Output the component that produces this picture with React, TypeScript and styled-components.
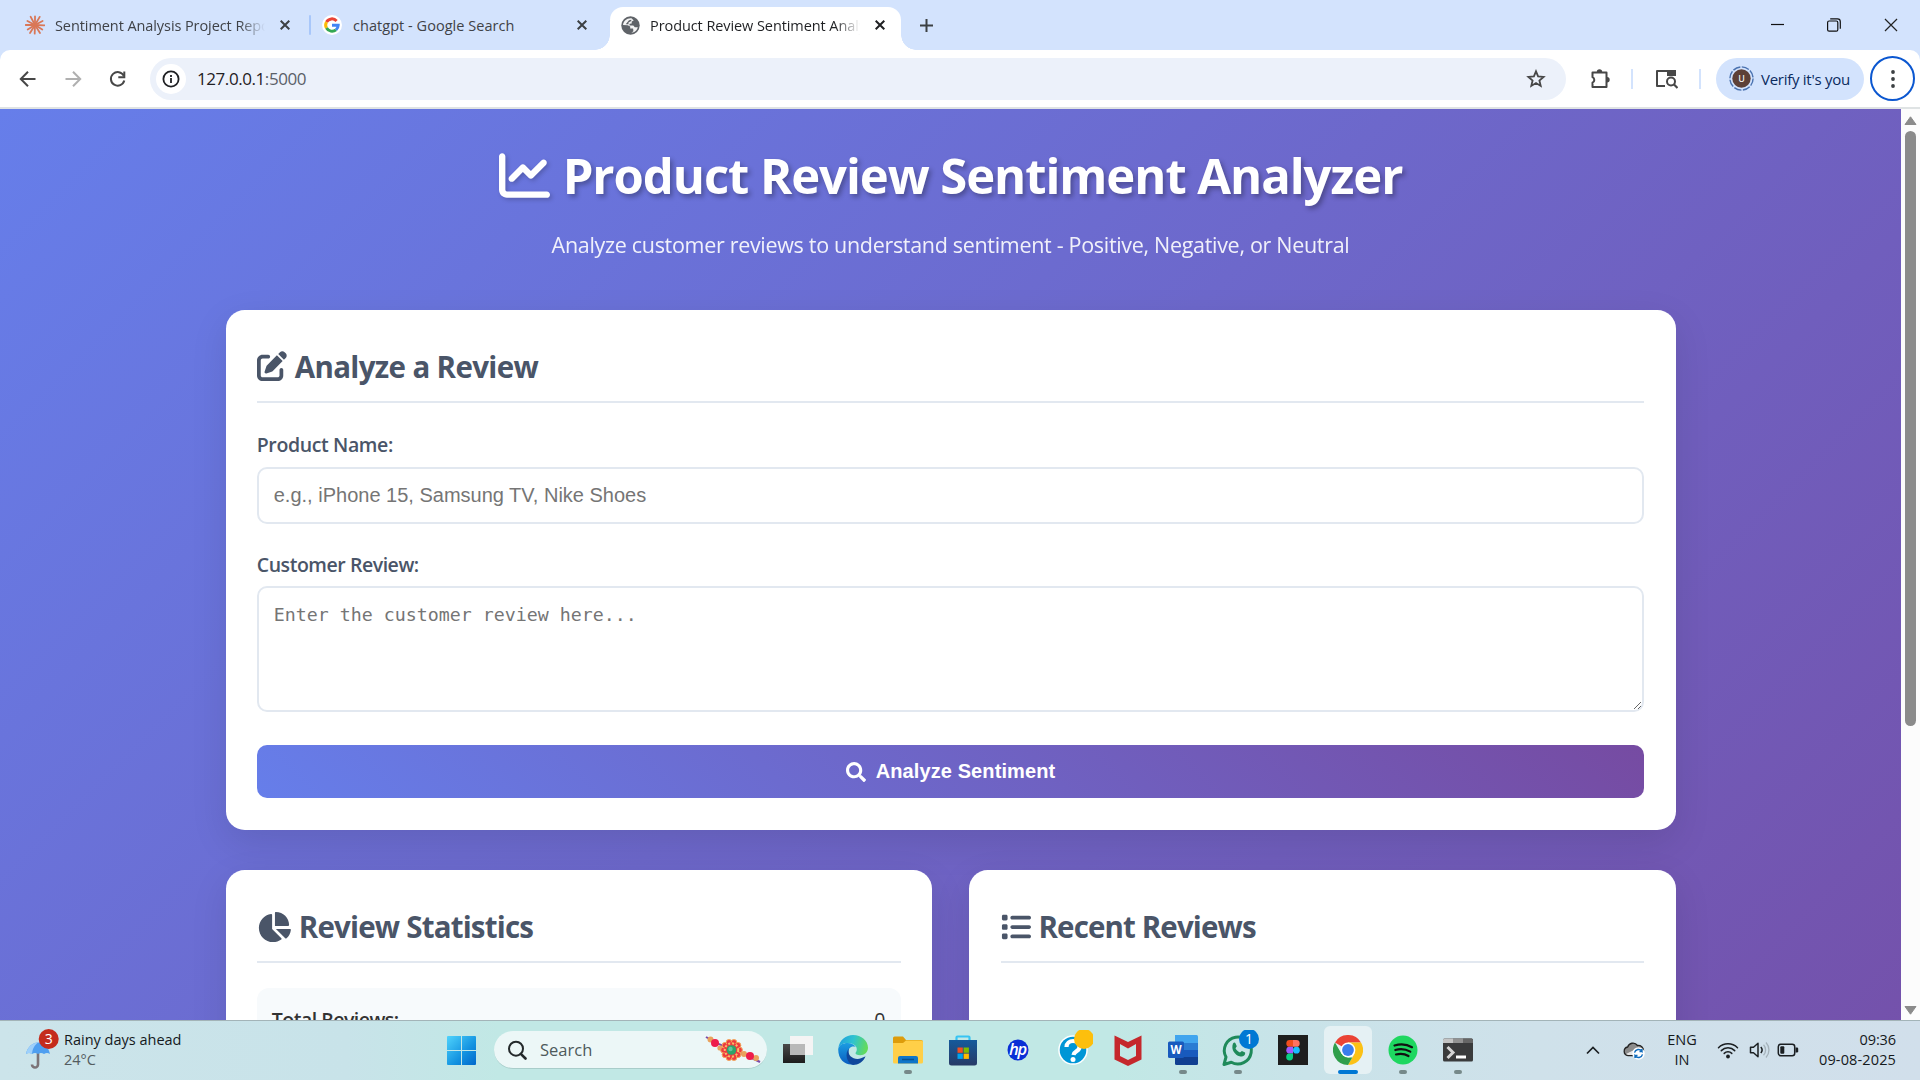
import React from 'react';
import styled, { createGlobalStyle } from 'styled-components';
import { FaChartLine, FaPenToSquare, FaChartPie, FaList } from 'react-icons/fa6';
import { FaSearch } from 'react-icons/fa';

const ui = `'Open Sans', 'Noto Sans', sans-serif`;

const GlobalStyle = createGlobalStyle`
  * { box-sizing: border-box; margin: 0; padding: 0; }
  body { width: 1920px; height: 1080px; overflow: hidden; font-family: ${ui}; }
  svg { display: block; flex: none; }
`;

const Screen = styled.div`
  width: 1920px;
  height: 1080px;
  display: flex;
  flex-direction: column;
  overflow: hidden;
`;

const Text = styled.span<{ $size: number; $track?: number; $weight?: number; $color?: string; $line?: number }>`
  display: block;
  white-space: pre;
  font-size: ${p => p.$size}px;
  letter-spacing: ${p => p.$track ?? 0}px;
  font-weight: ${p => p.$weight ?? 400};
  color: ${p => p.$color ?? 'inherit'};
  line-height: ${p => (p.$line ? `${p.$line}px` : 'normal')};
`;

/* ---------- browser chrome ---------- */

const TabStrip = styled.div`
  height: 50px;
  flex: none;
  display: flex;
  background: #d3e3fd;
`;

const Tab = styled.div<{ $width: number; $left: number }>`
  width: ${p => p.$width}px;
  height: 50px;
  padding-left: ${p => p.$left}px;
  display: flex;
  align-items: center;
  color: #3f4247;
`;

const ActiveTab = styled(Tab)`
  position: relative;
  height: 43px;
  margin-top: 7px;
  padding-bottom: 7px;
  background: #fff;
  border-radius: 13px 13px 0 0;
  color: #1f2023;
  &::before, &::after {
    content: '';
    position: absolute;
    bottom: 0;
    width: 15px;
    height: 15px;
  }
  &::before { left: -15px; background: radial-gradient(circle at 0 0, transparent 14.5px, #fff 15px); }
  &::after { right: -15px; background: radial-gradient(circle at 100% 0, transparent 14.5px, #fff 15px); }
`;

const TabTitle = styled.div<{ $width: number; $fade?: boolean; $gap: number }>`
  width: ${p => p.$width}px;
  margin-left: ${p => p.$gap}px;
  overflow: hidden;
  ${p => p.$fade && 'mask-image: linear-gradient(90deg, #000 88%, transparent 100%);'}
`;

const TabDivider = styled.div`
  width: 2px;
  height: 20px;
  margin-top: 15px;
  border-radius: 1px;
  background: #a8c7fa;
`;

const NewTab = styled.div`
  padding: 0 0 0 19px;
  display: flex;
  align-items: center;
`;

const WindowButtons = styled.div`
  margin-left: auto;
  width: 171px;
  display: flex;
  align-items: center;
  justify-content: space-around;
`;

const ToolbarBack = styled.div`
  height: 59px;
  flex: none;
  background: #d3e3fd;
`;

const Toolbar = styled.div`
  height: 59px;
  display: flex;
  align-items: center;
  padding: 0 5px 0 17px;
  background: #fff;
  border-bottom: 2px solid #dfe3e4;
  border-radius: 10px 10px 0 0;
`;

const NavIcons = styled.div`
  width: 133px;
  display: flex;
  gap: 23px;
`;

const Omnibox = styled.div`
  width: 1416px;
  height: 42px;
  border-radius: 21px;
  background: #ecf1fa;
  display: flex;
  align-items: center;
  padding: 0 20px 0 6px;
`;

const SiteInfo = styled.div`
  width: 30px;
  height: 30px;
  border-radius: 50%;
  background: #fff;
  display: grid;
  place-items: center;
  margin-right: 11px;
`;

const Port = styled.span`
  color: #5a6068;
`;

const StarSlot = styled.div`
  margin-left: auto;
`;

const Actions = styled.div`
  flex: 1;
  display: flex;
  align-items: center;
  justify-content: flex-end;
`;

const ActionSlot = styled.div<{ $width: number }>`
  width: ${p => p.$width}px;
  display: grid;
  place-items: center;
`;

const Divider = styled.div`
  width: 2px;
  height: 20px;
  background: #d3e3fd;
`;

const ProfilePill = styled.div`
  width: 148px;
  height: 42px;
  margin: 0 6px 0 15px;
  border-radius: 21px;
  background: #d3e3fd;
  display: flex;
  align-items: center;
  gap: 7px;
  padding-left: 13px;
`;

const MenuRing = styled.div`
  width: 45px;
  height: 45px;
  border: 2px solid #0b57d0;
  border-radius: 50%;
  display: grid;
  place-items: center;
`;

/* ---------- page ---------- */

const Viewport = styled.div`
  height: 911px;
  flex: none;
  display: flex;
  overflow: hidden;
`;

const Page = styled.main`
  width: 1901px;
  height: 1332px;
  background: linear-gradient(135deg, #667eea 0%, #764ba2 100%);
`;

const Container = styled.div`
  width: 1500px;
  margin: 0 auto;
  padding: 25px;
`;

const Header = styled.header`
  height: 175.6px;
  color: #fff;
  display: flex;
  flex-direction: column;
  align-items: center;
`;

const Title = styled.h1`
  height: 82px;
  display: flex;
  align-items: center;
  gap: 13px;
  text-shadow: 2.5px 2.5px 5px rgba(0, 0, 0, 0.3);
  svg { filter: drop-shadow(2px 2px 2px rgba(0, 0, 0, 0.2)); }
`;

const Subtitle = styled.div`
  padding-top: 14px;
  opacity: 0.9;
`;

const Card = styled.section<{ $height: number }>`
  height: ${p => p.$height}px;
  padding: 31.25px;
  border-radius: 18.75px;
  background: #fff;
  box-shadow: 0 12.5px 37.5px rgba(0, 0, 0, 0.1);
`;

const CardTitle = styled.h2<{ $gap: number }>`
  height: 62px;
  display: flex;
  align-items: center;
  gap: ${p => p.$gap}px;
  color: #4a5568;
  padding-bottom: 9px;
  border-bottom: 2.5px solid #e2e8f0;
`;

const Field = styled.div<{ $top: number }>`
  padding-top: ${p => p.$top}px;
`;

const Label = styled.label`
  display: block;
  height: 35.1px;
  color: #4a5568;
`;

const Input = styled.input`
  display: block;
  width: 100%;
  height: 57px;
  padding: 0 15px;
  border: 2.5px solid #e2e8f0;
  border-radius: 10px;
  font: 20px 'Liberation Sans', Arial, sans-serif;
  &::placeholder { color: #757575; opacity: 1; }
`;

const TextArea = styled.textarea`
  display: block;
  width: 100%;
  height: 126px;
  padding: 15px;
  border: 2.5px solid #e2e8f0;
  border-radius: 10px;
  font: 18.27px/24px 'DejaVu Sans Mono', monospace;
  resize: vertical;
  &::placeholder { color: #757575; opacity: 1; }
`;

const SubmitButton = styled.button`
  width: 100%;
  height: 53.5px;
  margin-top: 32.5px;
  border: 0;
  border-radius: 10px;
  background: linear-gradient(45deg, #667eea, #764ba2);
  color: #fff;
  font: bold 20px 'Liberation Sans', Arial, sans-serif;
  letter-spacing: 0.1px;
  display: flex;
  align-items: center;
  justify-content: center;
  gap: 10px;
`;

const Columns = styled.div`
  display: grid;
  grid-template-columns: 1fr 1fr;
  gap: 37.5px;
  margin-top: 40.4px;
`;

const StatRow = styled.div`
  margin-top: 25px;
  height: 70px;
  padding: 18px 15px 0;
  border-radius: 12px;
  background: #f7fafc;
  color: #333;
  display: flex;
  justify-content: space-between;
`;

const Scrollbar = styled.div`
  width: 19px;
  background: #fcfcfc;
  display: flex;
  flex-direction: column;
  align-items: center;
  padding: 7px 0 5px;
`;

const Thumb = styled.div`
  width: 11px;
  height: 595px;
  margin: 6px 0 auto;
  border-radius: 6px;
  background: #8b8b8b;
`;

/* ---------- taskbar ---------- */

const Taskbar = styled.footer`
  height: 60px;
  flex: none;
  display: flex;
  border-top: 1px solid #a3b4b8;
  background: linear-gradient(90deg, #cce4ea 0%, #c8e3e9 18%, #c1e8e5 26%, #c1e8e5 58%, #c9e3e9 68%, #cfe1ea 80%, #d1dfeb 100%);
  color: #15191c;
`;

const Weather = styled.div`
  width: 434px;
  padding: 0 0 2px 24px;
  display: flex;
  align-items: center;
  gap: 4px;
`;

const Start = styled.div`
  width: 60px;
  display: grid;
  place-items: center;
  padding-right: 6px;
`;

const SearchBox = styled.div`
  width: 273px;
  height: 38px;
  margin: 10px 3px 0 0;
  border-radius: 19px;
  border-bottom: 1px solid #a9cdca;
  background: #ecf7f7;
  display: flex;
  align-items: center;
  padding: 0 6px 0 13px;
  gap: 13px;
  > :last-child { margin-left: auto; }
`;

const AppButton = styled.div<{ $active?: boolean }>`
  width: 48px;
  height: 48px;
  margin: 5px 3.5px 0;
  border-radius: 6px;
  background: ${p => (p.$active ? '#e5f1f4' : 'transparent')};
  display: flex;
  flex-direction: column;
  align-items: center;
  justify-content: flex-end;
  gap: 5px;
`;

const AppIconBox = styled.div`
  width: 30px;
  height: 30px;
  display: flex;
  align-items: center;
  justify-content: center;
`;

const Indicator = styled.i<{ $kind?: 'open' | 'active' }>`
  width: ${p => (p.$kind === 'active' ? 20 : 8)}px;
  height: 4px;
  border-radius: 2px;
  background: ${p => (p.$kind === 'active' ? '#0078d4' : p.$kind === 'open' ? '#76898a' : 'transparent')};
`;

const Tray = styled.div`
  margin-left: auto;
  display: flex;
  align-items: center;
  padding: 0 24px 1px 0;
`;

const TraySlot = styled.div<{ $width: number }>`
  width: ${p => p.$width}px;
  display: grid;
  justify-items: center;
`;

const Clock = styled.div`
  width: 85px;
  display: grid;
  justify-items: end;
`;

/* ---------- icons ---------- */

const Cross = ({ size = 10, width = 2, color = '#3c4043' }: { size?: number; width?: number; color?: string }) => (
  <svg width={size} height={size} viewBox="0 0 10 10">
    <path d="M.7.7l8.6 8.6M9.3.7L.7 9.3" stroke={color} strokeWidth={(width * 10) / size} fill="none" />
  </svg>
);

const Burst = () => (
  <svg width="20" height="20" viewBox="-10 -10 20 20">
    {[2, 32, 58, 92, 122, 148, 180, 208, 242, 270, 300, 332].map((a, i) => (
      <path key={a} d={`M0 0L${i % 2 ? 8.6 : 9.4} 0`} stroke="#d97757" strokeWidth="1.8" strokeLinecap="round" transform={`rotate(${a})`} />
    ))}
  </svg>
);

const GoogleIcon = () => (
  <svg width="20" height="20" viewBox="0 0 20 20">
    <circle cx="10" cy="10" r="10" fill="#fff" />
    <g fill="none" strokeWidth="3">
      <path d="M14.6 5.9A6.3 6.3 0 0 0 4.5 7" stroke="#ea4335" />
      <path d="M4.5 6.9A6.3 6.3 0 0 0 4.5 13.1" stroke="#fbbc05" />
      <path d="M4.5 13A6.3 6.3 0 0 0 14 14.8" stroke="#34a853" />
      <path d="M10 10.2h6.2A6.3 6.3 0 0 1 14 14.8" stroke="#4285f4" />
    </g>
  </svg>
);

const GlobeIcon = () => (
  <svg width="19" height="19" viewBox="0 0 19 19">
    <circle cx="9.5" cy="9.5" r="9.2" fill="#5f6368" />
    <path d="M10.5 2.300C6 1.800 2.300 5 2 9l4.800.2 2.400 1.300v1.900l2.900.2.300 2.600-2 1.500c3.300-.1 5.800-2.400 6.400-5.400h-3l-1.500-1.700H8.500V7.700l2.200-.2V5.600l2-1z" fill="#fff" opacity=".93" />
    <path d="M8 4.300l2.300-.6v1.200L7.500 6.500v1.700H4.700z" fill="#5f6368" />
  </svg>
);

const Arrow = ({ flip, color }: { flip?: boolean; color: string }) => (
  <svg width="22" height="22" viewBox="0 0 22 22">
    <path d="M18.500 11H4.500M11 3.800L3.800 11l7.200 7.200" stroke={color} strokeWidth="2" fill="none" transform={flip ? 'rotate(180 11 11)' : undefined} />
  </svg>
);

const Reload = () => (
  <svg width="22" height="22" viewBox="0 0 22 22">
    <path d="M16.800 7.800A6.800 6.800 0 1 0 17.300 12.600" stroke="#474747" strokeWidth="2" fill="none" />
    <path d="M17.300 3.500v5.700h-6" stroke="#474747" strokeWidth="2" fill="none" />
  </svg>
);

const InfoIcon = () => (
  <svg width="18" height="18" viewBox="0 0 18 18">
    <circle cx="9" cy="9" r="7.600" stroke="#1f2023" strokeWidth="1.800" fill="none" />
    <path d="M9 8v5M9 5v1.900" stroke="#1f2023" strokeWidth="1.800" />
  </svg>
);

const StarIcon = () => (
  <svg width="20" height="20" viewBox="0 0 20 20">
    <path d="M10 2.300l2.100 5.100 5.500.5-4.200 3.600 1.300 5.400L10 14l-4.700 2.900 1.300-5.400-4.200-3.600 5.500-.5z" stroke="#474747" strokeWidth="1.800" fill="none" />
  </svg>
);

const PuzzleIcon = () => (
  <svg width="22" height="22" viewBox="0 0 22 22">
    <path d="M2.500 4.500h14v14.500h-14v-4.300a3 3 0 0 0 0-5.500z" stroke="#474747" strokeWidth="2" fill="none" strokeLinejoin="round" />
    <path d="M6.800 4a2.700 2.700 0 0 1 5.400 0zM17 9.100a2.700 2.700 0 0 1 0 5.400z" fill="#474747" />
  </svg>
);

const SideSearchIcon = () => (
  <svg width="24" height="22" viewBox="0 0 24 22">
    <path d="M11 18H3V3h18v5" stroke="#474747" strokeWidth="2" fill="none" strokeLinejoin="round" />
    <path d="M13 2h9v6h-9z" fill="#474747" />
    <circle cx="17" cy="13.500" r="4" stroke="#474747" strokeWidth="2" fill="#fff" />
    <path d="M19.800 16.300l3.700 3.700" stroke="#474747" strokeWidth="2.200" />
  </svg>
);

const Avatar = () => (
  <svg width="25" height="25" viewBox="0 0 25 25">
    <circle cx="12.500" cy="12.500" r="11.600" fill="none" stroke="#4a72b0" strokeWidth="1.400" strokeDasharray="7.600 1.500" />
    <circle cx="12.500" cy="12.500" r="9.200" fill="#5d4037" />
    <text x="12.500" y="16" fontSize="9.500" fill="#fff" textAnchor="middle" fontFamily="Roboto, sans-serif">U</text>
  </svg>
);

const Umbrella = () => (
  <svg width="36" height="42" viewBox="0 0 36 42">
    <path d="M14 21v14.500a3 3 0 0 1-6 0" stroke="#7c7478" strokeWidth="2.600" fill="none" />
    <path d="M2 25C3.500 18 8 14 14 13.500 20 14 24.500 18 26 25c-2-1.500-4-1.500-6 0-2-1.500-4-1.500-6 0-2-1.500-4-1.500-6 0-2-1.500-4-1.500-6 0z" fill="#4f9ff0" />
    <path d="M2 25C3.500 18 8 14 14 13.500 10 17 8.500 20 8 25c-2-1.500-4-1.500-6 0z" fill="#9ed0fb" />
    <circle cx="24.700" cy="10" r="10" fill="#c42b1c" />
    <text x="24.700" y="15" fontSize="14" fill="#fff" textAnchor="middle" fontFamily="Open Sans, sans-serif">3</text>
  </svg>
);

const WindowsLogo = () => (
  <svg width="29" height="29" viewBox="0 0 29 29">
    <defs>
      <linearGradient id="win" x1="0" y1="0" x2="1" y2="1">
        <stop offset="0" stopColor="#4fd3fc" />
        <stop offset=".6" stopColor="#1392e0" />
        <stop offset="1" stopColor="#0067cb" />
      </linearGradient>
    </defs>
    <path d="M1 0h13v14H0V1a1 1 0 0 1 1-1zM15 0h13a1 1 0 0 1 1 1v13H15zM0 15h14v14H1a1 1 0 0 1-1-1zM15 15h14v13a1 1 0 0 1-1 1H15z" fill="url(#win)" />
  </svg>
);

const SearchGlass = () => (
  <svg width="20" height="20" viewBox="0 0 20 20">
    <circle cx="9" cy="8.700" r="7" stroke="#24292b" strokeWidth="2" fill="none" />
    <path d="M13.800 13.800l4.700 4.700" stroke="#24292b" strokeWidth="2.600" strokeLinecap="round" />
  </svg>
);

const Rakhi = () => (
  <svg width="56" height="30" viewBox="0 0 56 30">
    <path d="M1 2Q14 10 28 15T55 27" stroke="#7b4aa8" strokeWidth="2" fill="none" />
    <g fill="#e9a25c">
      <circle cx="5.500" cy="4.500" r="3" />
      <circle cx="15" cy="13" r="2.600" />
      <circle cx="39" cy="19" r="3" />
      <circle cx="51" cy="23" r="3" />
    </g>
    <circle cx="10" cy="8" r="4" fill="#ee1d4b" />
    <circle cx="45" cy="21" r="4" fill="#ee1d4b" />
    {Array.from({ length: 10 }, (_, i) => (
      <circle key={i} cx={26.500 + 8 * Math.cos((i * Math.PI) / 5)} cy={15 + 8 * Math.sin((i * Math.PI) / 5)} r="2.900" fill="#ef3a3f" stroke="#f2a65c" strokeWidth="1" />
    ))}
    <circle cx="26.500" cy="15" r="7.500" fill="#ef3a3f" />
    <circle cx="26.500" cy="15" r="6.700" fill="none" stroke="#f8c06a" strokeWidth="2" strokeDasharray="2 2" />
    <circle cx="26.500" cy="15" r="4.800" fill="#2ea36a" />
    <circle cx="25.500" cy="14" r="2.200" fill="#63c5a0" />
  </svg>
);

const TaskViewIcon = () => (
  <svg width="30" height="30" viewBox="0 0 30 30">
    <defs>
      <linearGradient id="tv" x1="0" y1="0" x2="0" y2="1"><stop offset="0" stopColor="#4a4a4a" /><stop offset="1" stopColor="#1c1c1c" /></linearGradient>
    </defs>
    <path d="M0 9h22v19H0z" fill="url(#tv)" />
    <path d="M7 1h23v19H7z" fill="#f4f4f4" />
    <path d="M7 9h15v11H7z" fill="#b9b9b9" />
  </svg>
);

const EdgeIcon = () => (
  <svg width="30" height="30" viewBox="0 0 30 30">
    <defs>
      <linearGradient id="e1" x1="0" y1=".2" x2="1" y2=".4"><stop offset="0" stopColor="#1f9fe0" /><stop offset=".5" stopColor="#2fc3cf" /><stop offset="1" stopColor="#63db5a" /></linearGradient>
      <linearGradient id="e2" x1="0" y1="0" x2="0" y2="1"><stop offset="0" stopColor="#1b9de2" /><stop offset="1" stopColor="#0a5cc0" /></linearGradient>
    </defs>
    <path d="M.3 13C1.500 5 8 0 15 0c8.500 0 15 5.800 15 12.800 0 4.500-3.500 7.500-7.700 7.500-3.400 0-5-1.200-4.800-2.300.2-.9 1.300-1.300 1.300-3.800C18.800 10.500 14.500 8 10 8 5 8 1.500 10 .3 13z" fill="url(#e1)" />
    <path d="M.2 14C1 10 5 8 9.500 8c4 0 7 2 8.300 4-5-1.700-8 2-7.500 6 .6 5.500 5 9.700 10.700 8.700C13.500 33 0 29 .2 14z" fill="url(#e2)" />
    <path d="M11 13.500c-2.500 8 6 12 12 9.800 1.500-.5 3.500-1.500 4.500-2C25.500 27 20 30 15 30 8.500 28 6.500 18 11 13.500z" fill="#10479b" />
  </svg>
);

const FolderIcon = () => (
  <svg width="30" height="28" viewBox="0 0 30 28">
    <path d="M0 2a1.500 1.500 0 0 1 1.500-1.500h8.500l3 3.500H28a2 2 0 0 1 2 2v4H0z" fill="#dd9c0b" />
    <path d="M0 7h10l3-2.500h15.500A1.500 1.500 0 0 1 30 6v20a1.500 1.500 0 0 1-1.500 1.500h-27A1.500 1.500 0 0 1 0 26z" fill="#ffcf48" />
    <path d="M5 27.500V22a2 2 0 0 1 2-2h16a2 2 0 0 1 2 2v5.500z" fill="#0f76c9" />
    <path d="M9 23.500h12" stroke="#07508f" strokeWidth="1.500" />
  </svg>
);

const StoreIcon = () => (
  <svg width="30" height="31" viewBox="0 0 30 31">
    <path d="M8.500 6V2.500a1 1 0 0 1 1-1h11a1 1 0 0 1 1 1V6" stroke="#36c4f3" strokeWidth="2.200" fill="none" />
    <defs><linearGradient id="st" x1="0" y1="0" x2="0" y2="1"><stop offset="0" stopColor="#155a9c" /><stop offset="1" stopColor="#283a66" /></linearGradient></defs>
    <path d="M1 5h28v23a2.500 2.500 0 0 1-2.500 2.500h-23A2.500 2.500 0 0 1 1 28z" fill="url(#st)" />
    <path d="M9.500 12.500h5.300v5.300H9.500z" fill="#f25022" />
    <path d="M15.600 12.500h5.300v5.300h-5.300z" fill="#7fba00" />
    <path d="M9.500 18.600h5.300v5.300H9.500z" fill="#00a4ef" />
    <path d="M15.600 18.600h5.300v5.300h-5.300z" fill="#ffb900" />
  </svg>
);

const HpIcon = () => (
  <svg width="30" height="30" viewBox="0 0 30 30">
    <circle cx="15" cy="15" r="10.500" fill="#0a2fd6" />
    <text x="14.600" y="19.800" fontSize="16.500" fontStyle="italic" fontWeight="600" fill="#fff" textAnchor="middle" letterSpacing="-1" fontFamily="Open Sans, sans-serif">hp</text>
  </svg>
);

const HelpIcon = () => (
  <svg width="40" height="40" viewBox="0 0 40 40">
    <circle cx="20" cy="20" r="14.800" fill="#fff" />
    <circle cx="20" cy="20" r="13.300" fill="#0096d6" />
    <path d="M13.500 17c0-8 13-8 13 0 0 4.500-5.500 4-6 8" stroke="#fff" strokeWidth="4.200" fill="none" />
    <circle cx="20" cy="29.500" r="2.500" fill="#fff" />
    <circle cx="31" cy="9" r="10" fill="#fdbf0d" />
  </svg>
);

const McAfeeIcon = () => (
  <svg width="28" height="31" viewBox="0 0 28 31">
    <path d="M.5.500L14 7 27.500.5v24L14 31 .5 24.500zM6 9v12l8 4 8-4V9l-8 4.500z" fill="#c5282c" fillRule="evenodd" />
  </svg>
);

const WordIcon = () => (
  <svg width="30" height="30" viewBox="0 0 30 30">
    <path d="M7 0h21.500A1.500 1.500 0 0 1 30 1.500V8H7z" fill="#41a5ee" />
    <path d="M7 8h23v7H7z" fill="#2b7cd3" />
    <path d="M7 15h23v7H7z" fill="#185abd" />
    <path d="M7 22h23v6.500a1.500 1.500 0 0 1-1.500 1.500h-20A1.500 1.500 0 0 1 7 28.500z" fill="#103f91" />
    <rect x="0" y="6.500" width="16" height="16.500" rx="1.500" fill="#185abd" />
    <text x="8" y="19" fontSize="11.500" fontWeight="700" fill="#fff" textAnchor="middle" fontFamily="Open Sans, sans-serif">W</text>
  </svg>
);

const WhatsAppIcon = () => (
  <svg width="44" height="40" viewBox="0 0 44 40">
    <path d="M8 34.500l2-7.500a13.500 13.500 0 1 1 5.300 5.300z" stroke="#1f8a5a" strokeWidth="3" fill="none" strokeLinejoin="round" />
    <path d="M17 13.500c1-1.200 2-1.300 2.600 0l1.200 2.800-1.300 2c1 2 2.500 3.400 4.500 4.300l1.900-1.600 3.200 1.500c.6 3.500-3 4.500-5.500 3.800-4.500-1.300-9-6.500-6.600-12.800z" fill="#1f8a5a" />
    <circle cx="33" cy="9" r="10" fill="#0078d4" />
    <text x="33" y="14" fontSize="14" fill="#fff" textAnchor="middle" fontFamily="Open Sans, sans-serif">1</text>
  </svg>
);

const FigmaIcon = () => (
  <svg width="30" height="30" viewBox="0 0 30 30">
    <rect y="-2" width="30" height="34" rx="1.500" fill="#1e1e1e" />
    <path d="M15 5h-3.300a3.400 3.400 0 0 0 0 6.800H15z" fill="#f24e1e" />
    <path d="M15 5h3.300a3.400 3.400 0 0 1 0 6.800H15z" fill="#ff7262" />
    <path d="M15 11.800h-3.300a3.400 3.400 0 0 0 0 6.800H15z" fill="#a259ff" />
    <circle cx="18.400" cy="15.200" r="3.400" fill="#1abcfe" />
    <path d="M11.700 18.600H15V22a3.400 3.400 0 1 1-3.300-3.400z" fill="#0acf83" />
  </svg>
);

const ChromeIcon = () => (
  <svg width="30" height="30" viewBox="0 0 30 30">
    <path d="M15 15L2 7.500A15 15 0 0 1 28 7.500H15z" fill="#ea4335" />
    <path d="M15 7.500h13A15 15 0 0 1 15 30l6.500-11.300z" fill="#fbc116" />
    <path d="M2 7.500l6.500 11.300L15 22.500h4.300L15 30A15 15 0 0 1 2 7.500z" fill="#2f9e4b" />
    <circle cx="15" cy="15" r="7.400" fill="#fff" />
    <circle cx="15" cy="15" r="5.900" fill="#3b7ded" />
  </svg>
);

const TerminalIcon = () => (
  <svg width="30" height="30" viewBox="0 0 30 30">
    <rect y="3.500" width="30" height="23" rx="1.500" fill="#3a3b3c" />
    <path d="M0 5A1.500 1.500 0 0 1 1.500 3.500H10V8H0z" fill="#c4c4c4" />
    <path d="M10 3.500h10V8H10z" fill="#929292" />
    <path d="M20 3.500h8.500A1.500 1.500 0 0 1 30 5v3H20z" fill="#666" />
    <path d="M4.500 12l5.500 5.500L4.500 23" stroke="#d5d5d5" strokeWidth="3" fill="none" />
    <path d="M13 22h10" stroke="#fff" strokeWidth="3" />
  </svg>
);

const SpotifyIcon = () => (
  <svg width="30" height="30" viewBox="0 0 30 30">
    <circle cx="15" cy="15" r="14.500" fill="#1ed760" />
    <path d="M6.500 10.500c6-1.800 12.500-1.200 17.500 1.700M7.300 15c5-1.500 10.500-.9 15 1.600M8 19.500c4.300-1.200 8.800-.7 12.500 1.500" stroke="#111" strokeWidth="2.200" strokeLinecap="round" fill="none" />
  </svg>
);

const CloudIcon = () => (
  <svg width="22" height="20" viewBox="0 0 22 20">
    <path d="M5 15.500a4.300 4.300 0 0 1-.3-8.500C6 3 11.500 1.500 14.500 5.500c3.500-.3 6 2 6 5 0 2.500-1.500 5-4.500 5z" fill="#8b8b8b" stroke="#222" strokeWidth="1.300" />
    <path d="M3 14l10-5 6 2v4H5z" fill="#e6e6e6" />
    <circle cx="15.500" cy="13.500" r="6.200" fill="#fff" />
    <path d="M11.500 12.700a4.200 4.200 0 0 1 7.500-1.500v-2.200M19.500 14.300a4.200 4.200 0 0 1-7.500 1.500V18M19 11.500h-2.500M12 15.500h2.500" stroke="#0f6cbd" strokeWidth="1.400" fill="none" />
  </svg>
);

const WifiIcon = () => (
  <svg width="22" height="18" viewBox="0 0 22 18">
    <g stroke="#1b1f22" strokeWidth="1.500" fill="none" strokeLinecap="round">
      <path d="M1.500 6.800a13.300 13.300 0 0 1 19 0M4.300 9.600a9.400 9.400 0 0 1 13.400 0M7.200 12.400a5.400 5.400 0 0 1 7.600 0" />
    </g>
    <circle cx="11" cy="15.500" r="1.900" fill="#1b1f22" />
  </svg>
);

const SpeakerIcon = () => (
  <svg width="22" height="18" viewBox="0 0 22 18">
    <path d="M1.500 6.200h3L9 2.300v13.400L4.500 11.800h-3z" stroke="#1b1f22" strokeWidth="1.500" fill="none" strokeLinejoin="round" />
    <path d="M11.800 6a4.500 4.500 0 0 1 0 6" stroke="#1b1f22" strokeWidth="1.500" fill="none" />
    <path d="M14.500 3.800a7.500 7.500 0 0 1 0 10.400M17 1.500a11 11 0 0 1 0 15" stroke="#a5b2ba" strokeWidth="1.300" fill="none" />
  </svg>
);

const BatteryIcon = () => (
  <svg width="22" height="14" viewBox="0 0 22 14">
    <rect x="1.300" y="1.300" width="16.400" height="11.400" rx="2.500" stroke="#1b1f22" strokeWidth="1.500" fill="none" />
    <rect x="3.300" y="3.300" width="4" height="7.400" rx="1" fill="#1b1f22" />
    <path d="M18.500 4.500h1.500a1.200 1.200 0 0 1 1.200 1.200v2.600A1.200 1.200 0 0 1 20 9.500h-1.500z" fill="#1b1f22" />
  </svg>
);

const apps: { name: string; icon: React.ReactNode; state?: 'open' | 'active' }[] = [
  { name: 'taskview', icon: <TaskViewIcon /> },
  { name: 'edge', icon: <EdgeIcon /> },
  { name: 'explorer', icon: <FolderIcon />, state: 'open' },
  { name: 'store', icon: <StoreIcon /> },
  { name: 'hp', icon: <HpIcon /> },
  { name: 'help', icon: <HelpIcon /> },
  { name: 'mcafee', icon: <McAfeeIcon /> },
  { name: 'word', icon: <WordIcon />, state: 'open' },
  { name: 'whatsapp', icon: <WhatsAppIcon />, state: 'open' },
  { name: 'figma', icon: <FigmaIcon /> },
  { name: 'chrome', icon: <ChromeIcon />, state: 'active' },
  { name: 'spotify', icon: <SpotifyIcon />, state: 'open' },
  { name: 'terminal', icon: <TerminalIcon />, state: 'open' },
];

export default function App() {
  return (
    <Screen>
      <GlobalStyle />
      <TabStrip>
        <Tab $width={309} $left={25}>
          <Burst />
          <TabTitle $width={210} $gap={10} $fade><Text $size={14.5} $track={-0.08}>Sentiment Analysis Project Report</Text></TabTitle>
          <TabTitle $width={12} $gap={15}><Cross /></TabTitle>
        </Tab>
        <TabDivider />
        <Tab $width={299} $left={11}>
          <GoogleIcon />
          <TabTitle $width={210} $gap={11}><Text $size={14.5} $track={0.04}>chatgpt - Google Search</Text></TabTitle>
          <TabTitle $width={12} $gap={14}><Cross /></TabTitle>
        </Tab>
        <ActiveTab $width={291} $left={11}>
          <GlobeIcon />
          <TabTitle $width={210} $gap={10} $fade><Text $size={14.5} $track={-0.08}>Product Review Sentiment Analyzer</Text></TabTitle>
          <TabTitle $width={12} $gap={15}><Cross color="#1f2023" /></TabTitle>
        </ActiveTab>
        <NewTab>
          <svg width="13" height="13" viewBox="0 0 13 13"><path d="M6.500 0v13M0 6.500h13" stroke="#3c4043" strokeWidth="2" /></svg>
        </NewTab>
        <WindowButtons>
          <svg width="13" height="13" viewBox="0 0 13 13"><path d="M0 5.500h13" stroke="#111" strokeWidth="1.200" /></svg>
          <svg width="14" height="14" viewBox="0 0 14 14">
            <rect x=".6" y="3" width="10.200" height="10.200" rx="1.500" stroke="#111" strokeWidth="1.200" fill="none" />
            <path d="M3.200.9h7.300a2.800 2.800 0 0 1 2.800 2.800v7" stroke="#111" strokeWidth="1.200" fill="none" />
          </svg>
          <Cross size={14} width={1.2} color="#222" />
        </WindowButtons>
      </TabStrip>
      <ToolbarBack>
        <Toolbar>
          <NavIcons>
            <Arrow color="#474747" />
            <Arrow flip color="#b0b0b0" />
            <Reload />
          </NavIcons>
          <Omnibox>
            <SiteInfo><InfoIcon /></SiteInfo>
            <Text $size={17} $track={-0.43} $color="#1f2023">127.0.0.1<Port>:5000</Port></Text>
            <StarSlot><StarIcon /></StarSlot>
          </Omnibox>
          <Actions>
            <ActionSlot $width={60}><PuzzleIcon /></ActionSlot>
            <Divider />
            <ActionSlot $width={66}><SideSearchIcon /></ActionSlot>
            <Divider />
            <ProfilePill>
              <Avatar />
              <Text $size={15} $track={-0.27} $color="#0a2a5e">Verify it's you</Text>
            </ProfilePill>
            <MenuRing>
              <svg width="4" height="18" viewBox="0 0 4 18"><circle cx="2" cy="2" r="1.900" fill="#3c4043" /><circle cx="2" cy="9" r="1.900" fill="#3c4043" /><circle cx="2" cy="16" r="1.900" fill="#3c4043" /></svg>
            </MenuRing>
          </Actions>
        </Toolbar>
      </ToolbarBack>
      <Viewport>
        <Page>
          <Container>
            <Header>
              <Title>
                <FaChartLine size={51} />
                <Text $size={49} $weight={700} $track={-1.06}>Product Review Sentiment Analyzer</Text>
              </Title>
              <Subtitle><Text $size={21.5} $track={-0.31}>Analyze customer reviews to understand sentiment - Positive, Negative, or Neutral</Text></Subtitle>
            </Header>
            <Card $height={520}>
              <CardTitle $gap={8}>
                <FaPenToSquare size={30} />
                <Text $size={29.5} $weight={700} $track={-0.65}>Analyze a Review</Text>
              </CardTitle>
              <Field $top={28.6}>
                <Label><Text $size={19.5} $weight={600} $track={-0.38}>Product Name:</Text></Label>
                <Input placeholder="e.g., iPhone 15, Samsung TV, Nike Shoes" />
              </Field>
              <Field $top={27.85}>
                <Label><Text $size={19.5} $weight={600} $track={-0.45}>Customer Review:</Text></Label>
                <TextArea placeholder="Enter the customer review here..." />
              </Field>
              <SubmitButton>
                <FaSearch size={20} />
                <span>Analyze Sentiment</span>
              </SubmitButton>
            </Card>
            <Columns>
              <Card $height={420}>
                <CardTitle $gap={8}>
                  <FaChartPie size={34} />
                  <Text $size={29.5} $weight={700} $track={-0.8}>Review Statistics</Text>
                </CardTitle>
                <StatRow>
                  <Text $size={19.5} $weight={600} $track={-0.5}>Total Reviews:</Text>
                  <Text $size={19.5}>0</Text>
                </StatRow>
              </Card>
              <Card $height={420}>
                <CardTitle $gap={8}>
                  <FaList size={30} />
                  <Text $size={29.5} $weight={700} $track={-0.87}>Recent Reviews</Text>
                </CardTitle>
              </Card>
            </Columns>
          </Container>
        </Page>
        <Scrollbar>
          <svg width="13" height="9" viewBox="0 0 13 9"><path d="M6.500.8L12 8.500H1z" fill="#8b8b8b" stroke="#8b8b8b" strokeLinejoin="round" /></svg>
          <Thumb />
          <svg width="13" height="9" viewBox="0 0 13 9"><path d="M1 .5h11L6.500 8.200z" fill="#8b8b8b" stroke="#8b8b8b" strokeLinejoin="round" /></svg>
        </Scrollbar>
      </Viewport>
      <Taskbar>
        <Weather>
          <Umbrella />
          <div>
            <Text $size={14.5} $line={20}>Rainy days ahead</Text>
            <Text $size={14.5} $line={20} $color="#535c60">24°C</Text>
          </div>
        </Weather>
        <Start><WindowsLogo /></Start>
        <SearchBox>
          <SearchGlass />
          <Text $size={16.5} $color="#4e5a5b">Search</Text>
          <Rakhi />
        </SearchBox>
        {apps.map(app => (
          <AppButton key={app.name} $active={app.state === 'active'}>
            <AppIconBox>{app.icon}</AppIconBox>
            <Indicator $kind={app.state} />
          </AppButton>
        ))}
        <Tray>
          <TraySlot $width={36}>
            <svg width="14" height="9" viewBox="0 0 14 9"><path d="M1 7.500l6-6 6 6" stroke="#1b1f22" strokeWidth="1.700" fill="none" /></svg>
          </TraySlot>
          <TraySlot $width={46}><CloudIcon /></TraySlot>
          <TraySlot $width={50}>
            <Text $size={14.5} $line={20}>ENG</Text>
            <Text $size={14.5} $line={20}>IN</Text>
          </TraySlot>
          <TraySlot $width={42}><WifiIcon /></TraySlot>
          <TraySlot $width={16}><SpeakerIcon /></TraySlot>
          <TraySlot $width={46}><BatteryIcon /></TraySlot>
          <Clock>
            <Text $size={14.5} $line={20} $track={-0.1}>09:36</Text>
            <Text $size={14.5} $line={20} $track={0.13}>09-08-2025</Text>
          </Clock>
        </Tray>
      </Taskbar>
    </Screen>
  );
}
